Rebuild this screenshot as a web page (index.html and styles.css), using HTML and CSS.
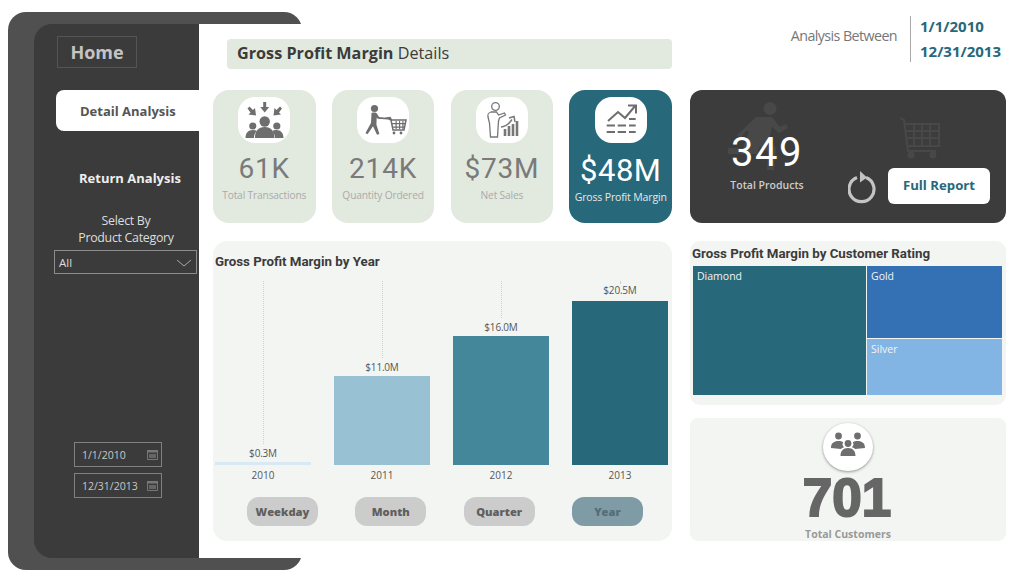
FILE: index.html
```html
<!DOCTYPE html>
<html lang="en">
<head>
  <meta charset="UTF-8">
  <meta name="viewport" content="width=device-width, initial-scale=1.0">
  <link rel="stylesheet" href="styles.css">
  <title>Gross Profit Margin Details</title>
</head>
<body>
  <div class="frame"></div>

  <div class="layout">
    <!-- Sidebar -->
    <nav class="sidebar">
      <div class="home">Home</div>
      <div class="nav-active">Detail Analysis</div>
      <div class="nav-link">Return Analysis</div>
      <div class="select-label">Select By<br>Product Category</div>
      <div class="slicer">
        <span>All</span>
        <svg width="16" height="8" viewBox="0 0 16 8"><path d="M1 1l7 6 7-6" fill="none" stroke="#aaa"/></svg>
      </div>
      <div class="date-input">
        <span>1/1/2010</span>
        <svg width="11" height="11" viewBox="0 0 11 11"><path d="M.5 1.500h10v9H.5z" fill="none" stroke="#777"/><path d="M0 1h11v2.500H0z" fill="#777"/><path d="M2 5h7v4H2z" fill="#666"/></svg>
      </div>
      <div class="date-input date-input-end">
        <span>12/31/2013</span>
        <svg width="11" height="11" viewBox="0 0 11 11"><path d="M.5 1.500h10v9H.5z" fill="none" stroke="#777"/><path d="M0 1h11v2.500H0z" fill="#777"/><path d="M2 5h7v4H2z" fill="#666"/></svg>
      </div>
    </nav>

    <main class="main">
      <!-- Left column -->
      <section class="col-left">
        <h1 class="page-title"><b>Gross Profit Margin</b> Details</h1>

        <div class="kpis">
          <div class="kpi">
            <div class="tile">
              <svg width="52" height="46" viewBox="0 0 52 46" fill="#6e6e6e">
                <path d="M25.200 5h3v5h3l-4.500 5.500L22.200 10h3zM9.500 11.500l2-2 3.500 3.500 2-2 1 7.500-7.500-1 2-2zM44 11.500l-2-2-3.500 3.500-2-2-1 7.500 7.500-1-2-2z"/>
                <circle cx="26.700" cy="24.500" r="5.200"/>
                <circle cx="14.800" cy="29" r="3.600"/>
                <circle cx="38.800" cy="29" r="3.600"/>
                <path d="M17 41c0-7 3-11 9.700-11s9.700 4 9.700 11zM7.500 41c0-5 2.500-8 7.500-8 1.500 0 2.500.3 3.500 1-1.500 2-2.500 4-2.500 7zM45.500 41c0-5-2.500-8-7.500-8-1.500 0-2.500.3-3.500 1 1.500 2 2.500 4 2.500 7z"/>
              </svg>
            </div>
            <div class="kpi-value">61K</div>
            <div class="kpi-label">Total Transactions</div>
          </div>

          <div class="kpi">
            <div class="tile">
              <svg width="52" height="46" viewBox="0 0 52 46" fill="#6e6e6e">
                <circle cx="17.500" cy="11.500" r="3.600"/>
                <path d="M14.500 16c3-1 5-.5 6 1.500l1.500 2.500 9 1-.3 1.500-10-.8-1-1.200-.3 7 3 9.500-2.400.8-4-8.500-5.500 8-2-1.400 5.500-10z"/>
                <path d="M30 21l3-.5 1.500 2.500H49l-2 10H36l-2-10z" fill="none" stroke="#6e6e6e" stroke-width="1.500"/>
                <path d="M35 26h13v1.300H35zM36 29.500h11v1.300H36zM38.500 24h1.200v8h-1.200zM42 24h1.200v8H42zM45.300 24h1.200v8h-1.200z"/>
                <circle cx="37" cy="36" r="1.400"/>
                <circle cx="44" cy="36" r="1.400"/>
              </svg>
            </div>
            <div class="kpi-value">214K</div>
            <div class="kpi-label">Quantity Ordered</div>
          </div>

          <div class="kpi">
            <div class="tile">
              <svg width="52" height="46" viewBox="0 0 52 46" fill="none" stroke="#777" stroke-width="1.300">
                <circle cx="19.500" cy="9.500" r="3.800"/>
                <path d="M15 15c-3 1-3.500 2-3 5l1.500 6 1 14h7l1-16 1-3 6-3-1-2-6 2-2-3z"/>
                <path d="M25 30c4-.5 8-3 11-7.500M33 21l5-1.500 1 5.500" stroke-width="1.500"/>
                <path d="M29 39v-7M33 39V29M37 39V27M41 39V24" stroke-width="2.600"/>
              </svg>
            </div>
            <div class="kpi-value">$73M</div>
            <div class="kpi-label">Net Sales</div>
          </div>

          <div class="kpi kpi-active">
            <div class="tile">
              <svg width="52" height="46" viewBox="0 0 52 46" fill="none" stroke="#6e6e6e">
                <path d="M13 24l10-9 7 6 10.500-12.500M33 8.500h8v8" stroke-width="2"/>
                <path d="M34 22h6.700M11.700 28.500H20M22.700 28.500H31M34 28.500h6.700M11.700 35H20M22.700 35H31M34 35h6.700" stroke-width="2.200"/>
              </svg>
            </div>
            <div class="kpi-value">$48M</div>
            <div class="kpi-label">Gross Profit Margin</div>
          </div>
        </div>

        <div class="chart-panel">
          <h2 class="panel-title">Gross Profit Margin by Year</h2>
          <div class="bars">
            <div class="bar-col">
              <div class="dots"></div>
              <div class="bar-value">$0.3M</div>
              <div class="bar bar-2010" style="height: 3px"></div>
              <div class="bar-year">2010</div>
            </div>
            <div class="bar-col">
              <div class="dots"></div>
              <div class="bar-value">$11.0M</div>
              <div class="bar bar-2011" style="height: 89px"></div>
              <div class="bar-year">2011</div>
            </div>
            <div class="bar-col">
              <div class="dots"></div>
              <div class="bar-value">$16.0M</div>
              <div class="bar bar-2012" style="height: 129px"></div>
              <div class="bar-year">2012</div>
            </div>
            <div class="bar-col">
              <div class="dots"></div>
              <div class="bar-value">$20.5M</div>
              <div class="bar bar-2013" style="height: 164px"></div>
              <div class="bar-year">2013</div>
            </div>
          </div>
          <div class="periods">
            <div class="period">Weekday</div>
            <div class="period">Month</div>
            <div class="period">Quarter</div>
            <div class="period period-active">Year</div>
          </div>
        </div>
      </section>

      <!-- Right column -->
      <section class="col-right">
        <div class="range">
          <div class="range-label">Analysis Between</div>
          <div class="range-dates">
            <div>1/1/2010</div>
            <div>12/31/2013</div>
          </div>
        </div>

        <div class="products">
          <svg class="ghost-runner" width="60" height="68" viewBox="0 0 60 68" fill="#484848">
            <circle cx="42" cy="6.500" r="6.500"/>
            <path d="M28 15h16l8 10 6-3 2 4-9 5-7-6-3 13 7 8-2 22h-7l1-18-8-6-3 8H0v-6h15l6-17h-3l-5 7-4-3z"/>
          </svg>
          <svg class="ghost-cart" width="40" height="42" viewBox="0 0 40 42" fill="none" stroke="#484848" stroke-width="2">
            <path d="M0 1l4 2 4 31h28"/>
            <path d="M5 7h34v22H8M6 14h33M7 21h32M14 7v22M22 7v22M30 7v22"/>
            <circle cx="11" cy="38" r="2.500" fill="#484848"/>
            <circle cx="33" cy="38" r="2.500" fill="#484848"/>
          </svg>
          <div class="products-stat">
            <div class="products-value">349</div>
            <div class="products-label">Total Products</div>
          </div>
          <svg class="refresh" width="30" height="34" viewBox="0 0 30 34" fill="none" stroke="#c4c4c4" stroke-width="3.200">
            <path d="M9 7.500a12.500 12.500 0 1 0 9 0"/>
            <path d="M12 1l7 6.500-7 5z" fill="#c4c4c4" stroke="none"/>
          </svg>
          <div class="report-btn">Full Report</div>
        </div>

        <div class="rating-panel">
          <h2 class="panel-title">Gross Profit Margin by Customer Rating</h2>
          <div class="treemap">
            <div class="tree-cell tree-diamond">Diamond</div>
            <div class="tree-cell tree-gold">Gold</div>
            <div class="tree-cell tree-silver">Silver</div>
          </div>
        </div>

        <div class="customers">
          <div class="badge">
            <svg width="34" height="30" viewBox="0 0 34 30" fill="#6e6e6e">
              <circle cx="7.500" cy="5" r="3.400"/>
              <circle cx="26.500" cy="5" r="3.400"/>
              <circle cx="17" cy="12.500" r="3.400"/>
              <path d="M0 17c0-5 3-7 7.500-7 2 0 3.500.4 4.700 1.200-1.500 2.500 0 4 1 5-1.500.3-2.500.8-3.400 1.800zM34 17c0-5-3-7-7.500-7-2 0-3.500.4-4.700 1.200 1.500 2.500 0 4-1 5 1.500.3 2.500.8 3.400 1.800zM9.500 25c0-5 2.500-8 7.500-8s7.500 3 7.500 8z"/>
            </svg>
          </div>
          <div class="customers-value">701</div>
          <div class="customers-label">Total Customers</div>
        </div>
      </section>
    </main>
  </div>
</body>
</html>
```

FILE: styles.css
```css
body {
  margin: 0;
  width: 1024px;
  height: 585px;
  overflow: hidden;
  position: relative;
  background: #fff;
  font-family: "Open Sans", sans-serif;
}

h1, h2 {
  margin: 0;
}

/* Lighter panel sitting behind the sidebar */
.frame {
  position: absolute;
  left: 8px;
  top: 12px;
  width: 294px;
  height: 558px;
  background: #505050;
  border-radius: 18px;
}

.layout {
  position: relative;
  display: flex;
  margin: 24px 0 0 34px;
  height: 534px;
}

/* Sidebar */
.sidebar {
  width: 165px;
  flex-shrink: 0;
  display: flex;
  flex-direction: column;
  box-sizing: border-box;
  padding-top: 12px;
  background: #3b3b3b;
  border-radius: 18px 0 0 18px;
}

.home {
  width: 80px;
  height: 32px;
  margin-left: 23px;
  box-sizing: border-box;
  border: 1px solid #545454;
  color: #c4c4c4;
  font-size: 18px;
  font-weight: 700;
  line-height: 30px;
  text-align: center;
}

.nav-active {
  height: 41px;
  margin: 22px 0 0 22px;
  padding-left: 24px;
  background: #fff;
  border-radius: 8px 0 0 8px;
  color: #555;
  font-size: 13px;
  font-weight: 700;
  line-height: 43px;
}

.nav-link {
  height: 41px;
  margin-top: 27px;
  padding-left: 45px;
  color: #eee;
  font-size: 13px;
  font-weight: 700;
  line-height: 41px;
}

.select-label {
  width: 184px;
  margin-top: 13px;
  color: #ddd;
  font-size: 12.400px;
  letter-spacing: -0.3px;
  line-height: 17px;
  text-align: center;
}

.slicer {
  display: flex;
  align-items: center;
  justify-content: space-between;
  width: 143px;
  height: 24px;
  margin: 4px 0 0 20px;
  padding: 1px 4px 0 4px;
  box-sizing: border-box;
  border: 1px solid #8c8c8c;
  color: #ddd;
  font-size: 11.500px;
}

.date-input {
  display: flex;
  align-items: center;
  justify-content: space-between;
  width: 88px;
  height: 25px;
  margin: 168px 0 0 40px;
  padding: 0 3px 0 7px;
  box-sizing: border-box;
  border: 1px solid #808080;
  color: #c8c8c8;
  font-size: 10.500px;
}

.date-input-end {
  margin-top: 6px;
}

/* Main area */
.main {
  flex: 1;
  display: flex;
  gap: 18px;
  box-sizing: border-box;
  padding: 15px 0 0 14px;
  background: #fff;
}

.col-left {
  width: 459px;
}

.col-right {
  width: 316px;
  margin-top: -23px;
}

.page-title {
  height: 30px;
  margin: 0 0 21px 14px;
  padding-left: 10px;
  background: #e2e9df;
  border-radius: 4px;
  color: #3b3b3b;
  font-size: 16.200px;
  font-weight: 400;
  line-height: 29px;
}

.kpis {
  display: flex;
  justify-content: space-between;
  margin-bottom: 18px;
}

.kpi {
  width: 102.500px;
  height: 133px;
  display: flex;
  flex-direction: column;
  align-items: center;
  background: #e2e9df;
  border-radius: 16px;
}

.kpi-active {
  background: #27687a;
}

.tile {
  width: 52px;
  height: 46px;
  margin-top: 7px;
  background: #fff;
  border-radius: 17px;
}

.kpi-value {
  margin-top: 9px;
  color: #7a7a7a;
  font-family: "Roboto", sans-serif;
  font-size: 28px;
  letter-spacing: 0.8px;
  line-height: 34px;
}

.kpi-label {
  margin-top: 2px;
  color: #aaa;
  font-size: 10.200px;
  letter-spacing: -0.15px;
  line-height: 14px;
  white-space: nowrap;
}

.kpi-active .kpi-value {
  margin-top: 10px;
  color: #fff;
  font-size: 31px;
  letter-spacing: 0.5px;
  line-height: 36px;
}

.kpi-active .kpi-label {
  margin-top: 1px;
  color: #e8e8e8;
  font-size: 10.500px;
}

.panel-title {
  color: #3b3b3b;
  font-family: "Roboto", sans-serif;
  font-size: 13.300px;
  font-weight: 700;
  line-height: 18px;
}

.chart-panel {
  height: 300px;
  box-sizing: border-box;
  padding: 12px 4px 0 2px;
  background: #f3f5f3;
  border-radius: 14px;
}

.bars {
  display: flex;
  gap: 23px;
  height: 204px;
  margin-top: 10px;
}

.bar-col {
  width: 96px;
  display: flex;
  flex-direction: column;
  align-items: center;
}

.dots {
  flex: 1;
  border-left: 1px dotted #cfcfcf;
}

.bar-value {
  margin: 2px 0;
  color: #555;
  font-size: 10px;
  letter-spacing: -0.2px;
  line-height: 14px;
}

.bar-col:last-child .bar-value {
  margin: 0 0 4px;
}

.bar {
  width: 96px;
}

.bar-2010 { background: #d8e8f4; }
.bar-2011 { background: #98c2d3; }
.bar-2012 { background: #44869a; }
.bar-2013 { background: #27687a; }

.bar-year {
  height: 20px;
  color: #555;
  font-size: 10px;
  line-height: 20px;
}

.periods {
  display: flex;
  gap: 37.330px;
  margin: 12px 0 0 32px;
}

.period {
  width: 71px;
  height: 29px;
  background: #ccc;
  border-radius: 12px;
  color: #5f5f5f;
  font-size: 11.200px;
  font-weight: 800;
  line-height: 29px;
  text-align: center;
}

.period-active {
  background: #7f9ba6;
  color: #566d77;
}

/* Right column */
.range {
  display: flex;
  justify-content: flex-end;
  align-items: center;
  height: 46px;
  margin-bottom: 28px;
}

.range-label {
  padding: 0 13px 8px 0;
  color: #777;
  font-size: 14.300px;
  letter-spacing: -0.6px;
}

.range-dates {
  display: flex;
  flex-direction: column;
  gap: 5px;
  height: 46px;
  padding-left: 9px;
  margin-right: 5px;
  box-sizing: border-box;
  border-left: 1px solid #aaa;
  color: #27687a;
  font-size: 15px;
  font-weight: 700;
  line-height: 20px;
}

.products {
  position: relative;
  height: 133px;
  display: flex;
  align-items: flex-end;
  box-sizing: border-box;
  padding-bottom: 19px;
  margin-bottom: 18px;
  background: #3c3c3c;
  border-radius: 12px;
}

.ghost-runner {
  position: absolute;
  left: 38px;
  top: 12px;
}

.ghost-cart {
  position: absolute;
  left: 210px;
  top: 27px;
}

.products-stat {
  position: relative;
  width: 120px;
  margin: 0 0 11px 17px;
  text-align: center;
}

.products-value {
  color: #fff;
  font-family: "Roboto", sans-serif;
  font-size: 40px;
  letter-spacing: 1.500px;
  line-height: 46px;
}

.products-label {
  margin-top: 1px;
  color: #ccc;
  font-size: 10.500px;
  font-weight: 600;
  line-height: 16px;
}

.refresh {
  position: relative;
  margin: 0 10px 0 21px;
}

.report-btn {
  position: relative;
  width: 102px;
  height: 36px;
  background: #fff;
  border-radius: 6px;
  color: #27687a;
  font-size: 13.200px;
  font-weight: 700;
  line-height: 35px;
  text-align: center;
}

.rating-panel {
  height: 164px;
  box-sizing: border-box;
  padding: 4px 4px 0 2px;
  margin-bottom: 13px;
  background: #f3f5f3;
  border-radius: 10px;
}

.treemap {
  display: grid;
  grid-template-columns: 173px 135px;
  grid-template-rows: 72px 56px;
  gap: 1px;
  margin: 3px 0 0 1px;
}

.tree-cell {
  padding: 3px 4px;
  color: #f4f4f4;
  font-size: 10.500px;
  line-height: 14px;
}

.tree-diamond {
  grid-row: span 2;
  background: #27687a;
}

.tree-gold { background: #3470b4; }
.tree-silver { background: #82b4e4; }

.customers {
  height: 123px;
  display: flex;
  flex-direction: column;
  align-items: center;
  box-sizing: border-box;
  padding: 5px 0 0 0;
  background: #f3f5f3;
  border-radius: 8px;
}

.badge {
  display: flex;
  justify-content: center;
  padding-top: 8px;
  width: 50px;
  height: 50px;
  box-sizing: border-box;
  background: #fff;
  border-radius: 50%;
  box-shadow: 0 1px 3px rgba(0, 0, 0, 0.4);
}

.customers-value {
  margin: 3px 2px 0 0;
  color: #666;
  font-family: "Liberation Sans", sans-serif;
  font-size: 53px;
  font-weight: 700;
  -webkit-text-stroke: 2px #666;
  line-height: 48px;
}

.customers-label {
  margin-top: 5px;
  color: #999;
  font-size: 10.500px;
  font-weight: 700;
  line-height: 14px;
}
```
